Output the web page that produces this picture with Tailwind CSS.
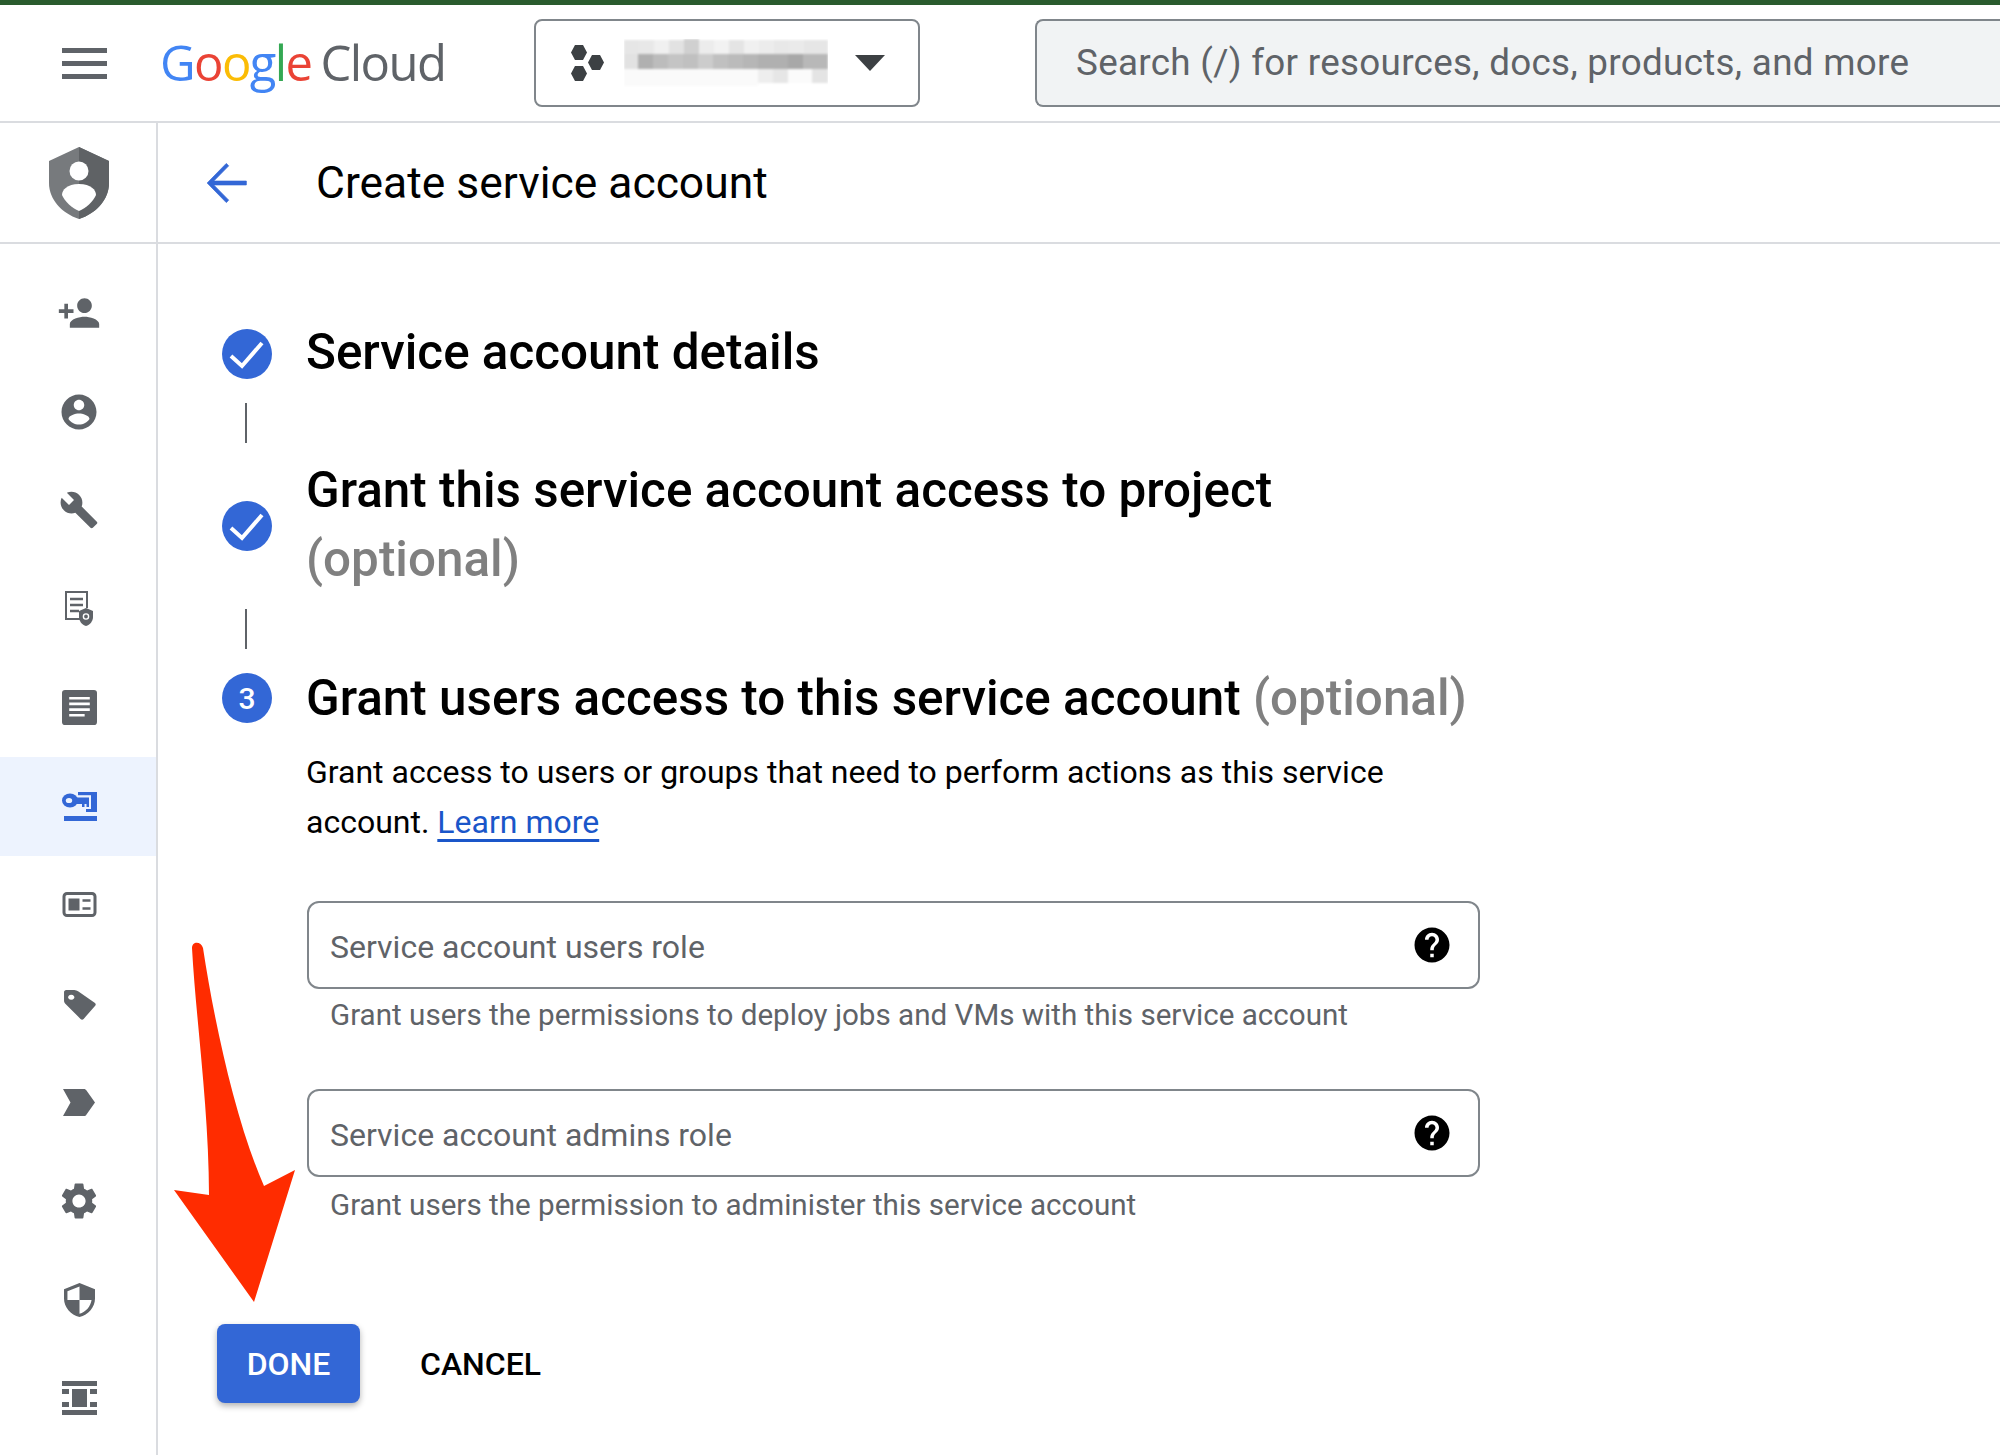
<!DOCTYPE html>
<html>
<head>
    <title>Create service account</title>
    <script src="https://cdn.jsdelivr.net/npm/@tailwindcss/browser@4"></script>
</head>
<body class="bg-white font-['Roboto',sans-serif] text-black">
<div class="relative w-[2000px] h-[1455px] overflow-hidden">

    <!-- top bar -->
    <div class="h-[5px] bg-[#2a5b2e]"></div>
    <header class="h-[118px] border-b-2 border-[#dadce0] flex items-center relative">
        <div class="ml-[62px] w-[45px] flex flex-col gap-[8px]">
            <div class="h-[5px] bg-[#5f6368]"></div>
            <div class="h-[5px] bg-[#5f6368]"></div>
            <div class="h-[5px] bg-[#5f6368]"></div>
        </div>
        <div class="ml-[53px] w-[289px] flex items-baseline font-['Open_Sans',sans-serif] text-[49px] tracking-[-1.6px] leading-none -mt-[2px]">
            <span class="font-medium text-[#4285f4]">G</span><span class="font-medium text-[#ea4335]">o</span><span class="font-medium text-[#fbbc05]">o</span><span class="font-medium text-[#4285f4]">g</span><span class="font-medium text-[#34a853]">l</span><span class="font-medium text-[#ea4335]">e</span><span class="text-[#5f6368] ml-[9px]">Cloud</span>
        </div>
        <div class="ml-[85px] w-[386px] h-[88px] border-2 border-[#80868b] rounded-[8px] flex items-center pl-[35px]">
            <svg class="w-[34px] h-[36px]" viewBox="0 0 34 36" fill="#3c4043">
                <polygon points="4,0 12,0 16,7.500 12,15 4,15 0,7.500"/>
                <polygon points="21,10 29,10 33,17.500 29,25 21,25 17,17.500"/>
                <polygon points="4,21 12,21 16,28.500 12,36 4,36 0,28.500"/>
            </svg>
            <svg class="w-[204px] h-[48px] ml-[19px]" viewBox="0 0 204 48">
                <g class="blur-[1px]">
                    <rect x="0" y="1" width="15" height="14" fill="#e6e6e6"/>
                    <rect x="15" y="1" width="15" height="14" fill="#e8e8e8"/>
                    <rect x="30" y="1" width="15" height="14" fill="#f0f0f0"/>
                    <rect x="45" y="1" width="15" height="14" fill="#e2e2e2"/>
                    <rect x="60" y="0" width="15" height="15" fill="#d0d0d0"/>
                    <rect x="75" y="1" width="15" height="14" fill="#ececec"/>
                    <rect x="90" y="1" width="15" height="14" fill="#f2f2f2"/>
                    <rect x="105" y="1" width="15" height="14" fill="#e4e4e4"/>
                    <rect x="120" y="1" width="15" height="14" fill="#f0f0f0"/>
                    <rect x="135" y="1" width="15" height="14" fill="#ececec"/>
                    <rect x="150" y="1" width="15" height="14" fill="#e8e8e8"/>
                    <rect x="165" y="1" width="15" height="14" fill="#eaeaea"/>
                    <rect x="180" y="1" width="24" height="14" fill="#e6e6e6"/>
                    <rect x="0" y="15" width="14" height="15" fill="#e2e2e2"/>
                    <rect x="14" y="15" width="15" height="15" fill="#b0b0b0"/>
                    <rect x="29" y="15" width="15" height="15" fill="#bcbcbc"/>
                    <rect x="44" y="15" width="15" height="15" fill="#c4c4c4"/>
                    <rect x="59" y="15" width="15" height="15" fill="#c0c0c0"/>
                    <rect x="74" y="15" width="15" height="15" fill="#cccccc"/>
                    <rect x="89" y="15" width="15" height="15" fill="#c0c0c0"/>
                    <rect x="104" y="15" width="15" height="15" fill="#bbbbbb"/>
                    <rect x="119" y="15" width="15" height="15" fill="#b6b6b6"/>
                    <rect x="134" y="15" width="30" height="15" fill="#b0b0b0"/>
                    <rect x="164" y="15" width="15" height="15" fill="#a8a8a8"/>
                    <rect x="179" y="15" width="25" height="15" fill="#b8b8b8"/>
                    <rect x="0" y="30" width="134" height="17" fill="#fafafa"/>
                    <rect x="134" y="30" width="15" height="14" fill="#eeeeee"/>
                    <rect x="149" y="30" width="15" height="14" fill="#e6e6e6"/>
                    <rect x="164" y="30" width="24" height="14" fill="#fbfbfb"/>
                    <rect x="188" y="30" width="16" height="14" fill="#e4e4e4"/>
                </g>
            </svg>
            <svg class="w-[30px] h-[16px] ml-[27px]" viewBox="0 0 30 16" fill="#3c4043"><polygon points="0,0 30,0 15,16"/></svg>
        </div>
        <div class="ml-[115px] flex-1 h-[88px] border-2 border-r-0 border-[#80868b] rounded-l-[8px] bg-[#f1f3f4] flex items-center pl-[39px] text-[#5f6368] text-[36.8px] tracking-[0.3px]">
            Search (/) for resources, docs, products, and more
        </div>
    </header>

    <div class="flex h-[1332px]">
        <!-- left rail -->
        <aside class="w-[158px] shrink-0 border-r-2 border-[#dadce0] pl-[2px] flex flex-col text-[#5f6368]">
            <div class="h-[121px] border-b-2 border-[#dadce0] flex items-center justify-center shrink-0 -ml-[2px] -mr-[2px]">
                <svg class="w-[60px] h-[72px]" viewBox="0 0 60 72">
                    <path fill="#777a7d" d="M30 0 L60 14 V36 C60 52 48 66 30 72 C12 66 0 52 0 36 V14 Z"/>
                    <path fill="#5f6265" d="M30 0 L60 14 V36 C60 52 48 66 30 72 Z"/>
                    <circle cx="30" cy="24" r="9.5" fill="#fff"/>
                    <path fill="#fff" d="M30 37 C42 37 47 43 47 48 C44 55 37 61 30 64 C23 61 16 55 13 48 C13 43 18 37 30 37 Z"/>
                </svg>
            </div>
            <div class="h-[20px] shrink-0"></div>
            <div class="h-[98.6px] flex items-center justify-center shrink-0">
                <svg class="w-[44px] h-[44px]" viewBox="0 0 24 24" fill="currentColor"><path d="M15 12c2.21 0 4-1.79 4-4s-1.79-4-4-4-4 1.79-4 4 1.79 4 4 4zm-9-2V7H4v3H1v2h3v3h2v-3h3v-2H6zm9 4c-2.67 0-8 1.34-8 4v2h16v-2c0-2.66-5.33-4-8-4z"/></svg>
            </div>
            <div class="h-[98.6px] flex items-center justify-center shrink-0">
                <svg class="w-[42px] h-[42px]" viewBox="0 0 24 24" fill="currentColor"><path d="M12 2C6.48 2 2 6.48 2 12s4.48 10 10 10 10-4.48 10-10S17.52 2 12 2zm0 3c1.66 0 3 1.34 3 3s-1.34 3-3 3-3-1.34-3-3 1.34-3 3-3zm0 14.2c-2.5 0-4.71-1.28-6-3.22.03-1.99 4-3.08 6-3.08 1.99 0 5.97 1.09 6 3.08-1.29 1.94-3.5 3.22-6 3.22z"/></svg>
            </div>
            <div class="h-[98.6px] flex items-center justify-center shrink-0">
                <svg class="w-[40px] h-[40px]" viewBox="0 0 24 24" fill="currentColor"><path d="M22.7 19l-9.1-9.1c.9-2.3.4-5-1.5-6.9-2-2-5-2.4-7.4-1.3L9 6 6 9 1.6 4.7C.4 7.1.9 10.1 2.9 12.1c1.9 1.9 4.6 2.4 6.9 1.5l9.1 9.1c.4.4 1 .4 1.4 0l2.3-2.3c.5-.4.5-1.1.1-1.4z"/></svg>
            </div>
            <div class="h-[98.6px] flex items-center justify-center shrink-0">
                <svg class="w-[30px] h-[36px]" viewBox="0 0 30 36" fill="none">
                    <path d="M19 28H2V1h21v16" stroke="currentColor" stroke-width="2"/>
                    <path d="M6 8h13M6 14h13M6 20h9" stroke="currentColor" stroke-width="2.4"/>
                    <path d="M22 17l7 3v6c0 4-3 8-7 9-4-1-7-5-7-9v-6z" fill="currentColor"/>
                    <circle cx="22" cy="25.5" r="2.6" stroke="#fff" stroke-width="1.4"/>
                </svg>
            </div>
            <div class="h-[98.6px] flex items-center justify-center shrink-0">
                <svg class="w-[35px] h-[35px]" viewBox="0 0 34 34">
                    <rect width="34" height="34" rx="3" fill="currentColor"/>
                    <path d="M7 8h20M7 13.500h20M7 19h20M7 24.500h15" stroke="#fff" stroke-width="2.600"/>
                </svg>
            </div>
            <div class="h-[98.6px] flex items-center justify-center shrink-0 -ml-[2px] pl-[2px] bg-[#edf3fe] text-[#3367d6]">
                <svg class="w-[35px] h-[29px] mt-[1px]" viewBox="0 0 35 29" fill="currentColor">
                    <ellipse cx="8" cy="8.500" rx="8" ry="7"/>
                    <ellipse cx="7" cy="8.500" rx="3.200" ry="2.600" fill="#edf3fe"/>
                    <rect x="12" y="5.500" width="15" height="6.500"/>
                    <rect x="20" y="12" width="2.500" height="3"/>
                    <rect x="24.500" y="12" width="2.500" height="3"/>
                    <rect x="16" y="0" width="19" height="3.200"/>
                    <rect x="29" y="0" width="6" height="20"/>
                    <rect x="24" y="17" width="11" height="3"/>
                    <rect x="2" y="24" width="33" height="5"/>
                </svg>
            </div>
            <div class="h-[98.6px] flex items-center justify-center shrink-0">
                <svg class="w-[35px] h-[25px]" viewBox="0 0 34 25" fill="none">
                    <rect x="1.500" y="1.500" width="31" height="22" rx="3" stroke="currentColor" stroke-width="3"/>
                    <rect x="6" y="6.500" width="11" height="12" fill="currentColor"/>
                    <path d="M20 8.500h8M20 16.500h8" stroke="currentColor" stroke-width="2.500"/>
                </svg>
            </div>
            <div class="h-[98.6px] flex items-center justify-center shrink-0">
                <svg class="w-[33px] h-[32px] mt-[3px]" viewBox="2 1 32 31" fill="currentColor"><path fill-rule="evenodd" d="M3 4C3 3 4 2 5 2h8c1 0 3 .8 4 1.500l16 11c1 1 1 2 0 3L22 30c-1 1-2 1-3 0L4 15C3 14 3 13 3 12zM10 6.500a3 2.500 0 1 0 .01 0z"/></svg>
            </div>
            <div class="h-[98.6px] flex items-center justify-center shrink-0">
                <svg class="w-[32px] h-[27px]" viewBox="0 0 32 25" preserveAspectRatio="none" fill="currentColor"><path d="M0 25l7.500-12.500L0 0h21c1 0 2 .5 2.500 1.500L32 12.500 23.500 23.500c-.5 1-1.500 1.500-2.500 1.500z"/></svg>
            </div>
            <div class="h-[98.6px] flex items-center justify-center shrink-0">
                <svg class="w-[44px] h-[44px]" viewBox="0 0 24 24" fill="currentColor"><path d="M19.14 12.94c.04-.3.06-.61.06-.94 0-.32-.02-.64-.07-.94l2.03-1.58c.18-.14.23-.41.12-.61l-1.92-3.32c-.12-.22-.37-.29-.59-.22l-2.39.96c-.5-.38-1.03-.7-1.62-.94l-.36-2.54c-.04-.24-.24-.41-.48-.41h-3.84c-.24 0-.43.17-.47.41l-.36 2.54c-.59.24-1.13.57-1.62.94l-2.39-.96c-.22-.08-.47 0-.59.22L2.74 8.87c-.12.21-.08.47.12.61l2.03 1.58c-.05.3-.09.63-.09.94s.02.64.07.94l-2.03 1.58c-.18.14-.23.41-.12.61l1.92 3.32c.12.22.37.29.59.22l2.39-.96c.5.38 1.03.7 1.62.94l.36 2.54c.05.24.24.41.48.41h3.84c.24 0 .44-.17.47-.41l.36-2.54c.59-.24 1.13-.56 1.62-.94l2.39.96c.22.08.47 0 .59-.22l1.92-3.32c.12-.22.07-.47-.12-.61l-2.01-1.58zM12 15.600c-1.98 0-3.6-1.62-3.6-3.6s1.620-3.6 3.6-3.6 3.6 1.620 3.6 3.6-1.620 3.6-3.6 3.6z"/></svg>
            </div>
            <div class="h-[98.6px] flex items-center justify-center shrink-0">
                <svg class="w-[31px] h-[34px] mt-[1px]" viewBox="3 1 18 22" preserveAspectRatio="none" fill="currentColor"><path d="M12 1L3 5v6c0 5.550 3.840 10.740 9 12 5.160-1.260 9-6.450 9-12V5l-9-4zm0 10.990h7c-.53 4.120-3.280 7.790-7 8.940V12H5V6.300l7-3.110v8.800z"/></svg>
            </div>
            <div class="h-[98.6px] flex items-center justify-center shrink-0">
                <svg class="w-[35px] h-[34px]" viewBox="0 0 35 34" fill="currentColor">
                    <rect width="35" height="5"/><rect y="29" width="35" height="5"/>
                    <rect y="8" width="7" height="5"/><rect y="21" width="7" height="5"/>
                    <rect x="28" y="8" width="7" height="5"/><rect x="28" y="21" width="7" height="5"/>
                    <rect x="10" y="8" width="15" height="18"/>
                </svg>
            </div>
        </aside>

        <!-- main -->
        <main class="flex-1 flex flex-col min-w-0">
            <div class="h-[121px] shrink-0 border-b-2 border-[#dadce0] flex items-center">
                <svg class="w-[58px] h-[58px] ml-[40px] text-[#3367d6]" viewBox="0 0 24 24" fill="currentColor" stroke="currentColor" stroke-width="0.3"><path d="M20 11.200H6.500l6.200-6.300-1-1L3.800 12l7.900 8.100 1-1-6.200-6.300H20z"/></svg>
                <h1 class="ml-[60px] text-[44.4px] leading-none mt-[2px]">Create service account</h1>
            </div>

            <div class="w-[1258px] ml-[64px] mt-[85px] flex flex-col">
                <!-- step 1 -->
                <div class="flex items-center h-[50px]">
                    <div class="w-[50px] h-[50px] rounded-full bg-[#3367d6] flex items-center justify-center shrink-0">
                        <svg class="w-[50px] h-[50px]" viewBox="0 0 50 50" fill="none" stroke="#fff" stroke-width="4"><path d="M9 27l11 10L40 14"/></svg>
                    </div>
                    <h2 class="ml-[34px] text-[49.4px] font-medium leading-none mb-[3px] whitespace-nowrap">Service account details</h2>
                </div>
                <div class="w-[2px] h-[40px] bg-[#5f6368] ml-[23px] mt-[24px]"></div>

                <!-- step 2 -->
                <div class="flex items-center mt-[14px]">
                    <div class="w-[50px] h-[50px] rounded-full bg-[#3367d6] flex items-center justify-center shrink-0">
                        <svg class="w-[50px] h-[50px]" viewBox="0 0 50 50" fill="none" stroke="#fff" stroke-width="4"><path d="M9 27l11 10L40 14"/></svg>
                    </div>
                    <h2 class="ml-[34px] text-[49.4px] font-medium leading-[69px] whitespace-nowrap -translate-y-[1px]">Grant this service account access to project<br><span class="text-[#808080]">(optional)</span></h2>
                </div>
                <div class="w-[2px] h-[40px] bg-[#5f6368] ml-[23px] mt-[14px]"></div>

                <!-- step 3 -->
                <div class="flex items-center h-[50px] mt-[24px]">
                    <div class="w-[50px] h-[50px] rounded-full bg-[#3367d6] text-white flex items-center justify-center shrink-0 text-[30px] font-medium">3</div>
                    <h2 class="ml-[34px] text-[49.4px] font-medium leading-none whitespace-nowrap mt-[1px]">Grant users access to this service account <span class="text-[#808080]">(optional)</span></h2>
                </div>

                <div class="ml-[85px] mt-[24px] flex flex-col">
                    <p class="text-[32px] leading-[50px] -ml-[1px]">Grant access to users or groups that need to perform actions as this service account. <a class="text-[#1a56c9] underline underline-offset-[6px]">Learn more</a></p>

                    <div class="mt-[54px] h-[88px] border-2 border-[#80868b] rounded-[12px] flex items-center justify-between pl-[21px] pr-[25px] text-[32px] text-[#5f6368]">
                        <span class="mt-[3px]">Service account users role</span>
                        <svg class="w-[42px] h-[42px] -mt-[1px]" viewBox="0 0 24 24" fill="#000"><path d="M12 2C6.480 2 2 6.480 2 12s4.480 10 10 10 10-4.480 10-10S17.520 2 12 2zm1 17h-2v-2h2v2zm2.070-7.750l-.9.920C13.450 12.900 13 13.500 13 15h-2v-.5c0-1.100.450-2.100 1.170-2.830l1.240-1.260c.370-.360.590-.860.590-1.410 0-1.100-.9-2-2-2s-2 .9-2 2H8c0-2.210 1.790-4 4-4s4 1.790 4 4c0 .880-.360 1.680-.930 2.250z"/></svg>
                    </div>
                    <p class="ml-[23px] mt-[6px] text-[29.6px] leading-[40px] text-[#5f6368]">Grant users the permissions to deploy jobs and VMs with this service account</p>

                    <div class="mt-[54px] h-[88px] border-2 border-[#80868b] rounded-[12px] flex items-center justify-between pl-[21px] pr-[25px] text-[32px] text-[#5f6368]">
                        <span class="mt-[3px]">Service account admins role</span>
                        <svg class="w-[42px] h-[42px] -mt-[1px]" viewBox="0 0 24 24" fill="#000"><path d="M12 2C6.480 2 2 6.480 2 12s4.480 10 10 10 10-4.480 10-10S17.520 2 12 2zm1 17h-2v-2h2v2zm2.070-7.750l-.9.920C13.450 12.900 13 13.500 13 15h-2v-.5c0-1.100.450-2.100 1.170-2.830l1.240-1.260c.370-.360.590-.860.590-1.410 0-1.100-.9-2-2-2s-2 .9-2 2H8c0-2.210 1.790-4 4-4s4 1.790 4 4c0 .880-.360 1.680-.930 2.250z"/></svg>
                    </div>
                    <p class="ml-[23px] mt-[8px] text-[29.6px] leading-[40px] text-[#5f6368]">Grant users the permission to administer this service account</p>
                </div>

                <div class="flex items-center mt-[99px] -ml-[5px]">
                    <button class="w-[143px] h-[79px] rounded-[8px] bg-[#3367d6] text-white text-[32px] font-medium shadow-[0_3px_6px_rgba(0,0,0,0.3)]">DONE</button>
                    <button class="ml-[60px] text-[32px] font-medium">CANCEL</button>
                </div>
            </div>
        </main>
    </div>

    <!-- red annotation arrow over the page -->
    <svg class="absolute left-[170px] top-[938px] w-[130px] h-[366px]" viewBox="170 938 130 366">
        <path fill="#ff2c00" d="M192 948 C192 941 201 941 203 948 C214 1020 235 1120 264 1186 L295 1170 L254 1302 L174 1190 L209 1195 C209 1110 196 1020 192 948 Z"/>
    </svg>
</div>
</body>
</html>
